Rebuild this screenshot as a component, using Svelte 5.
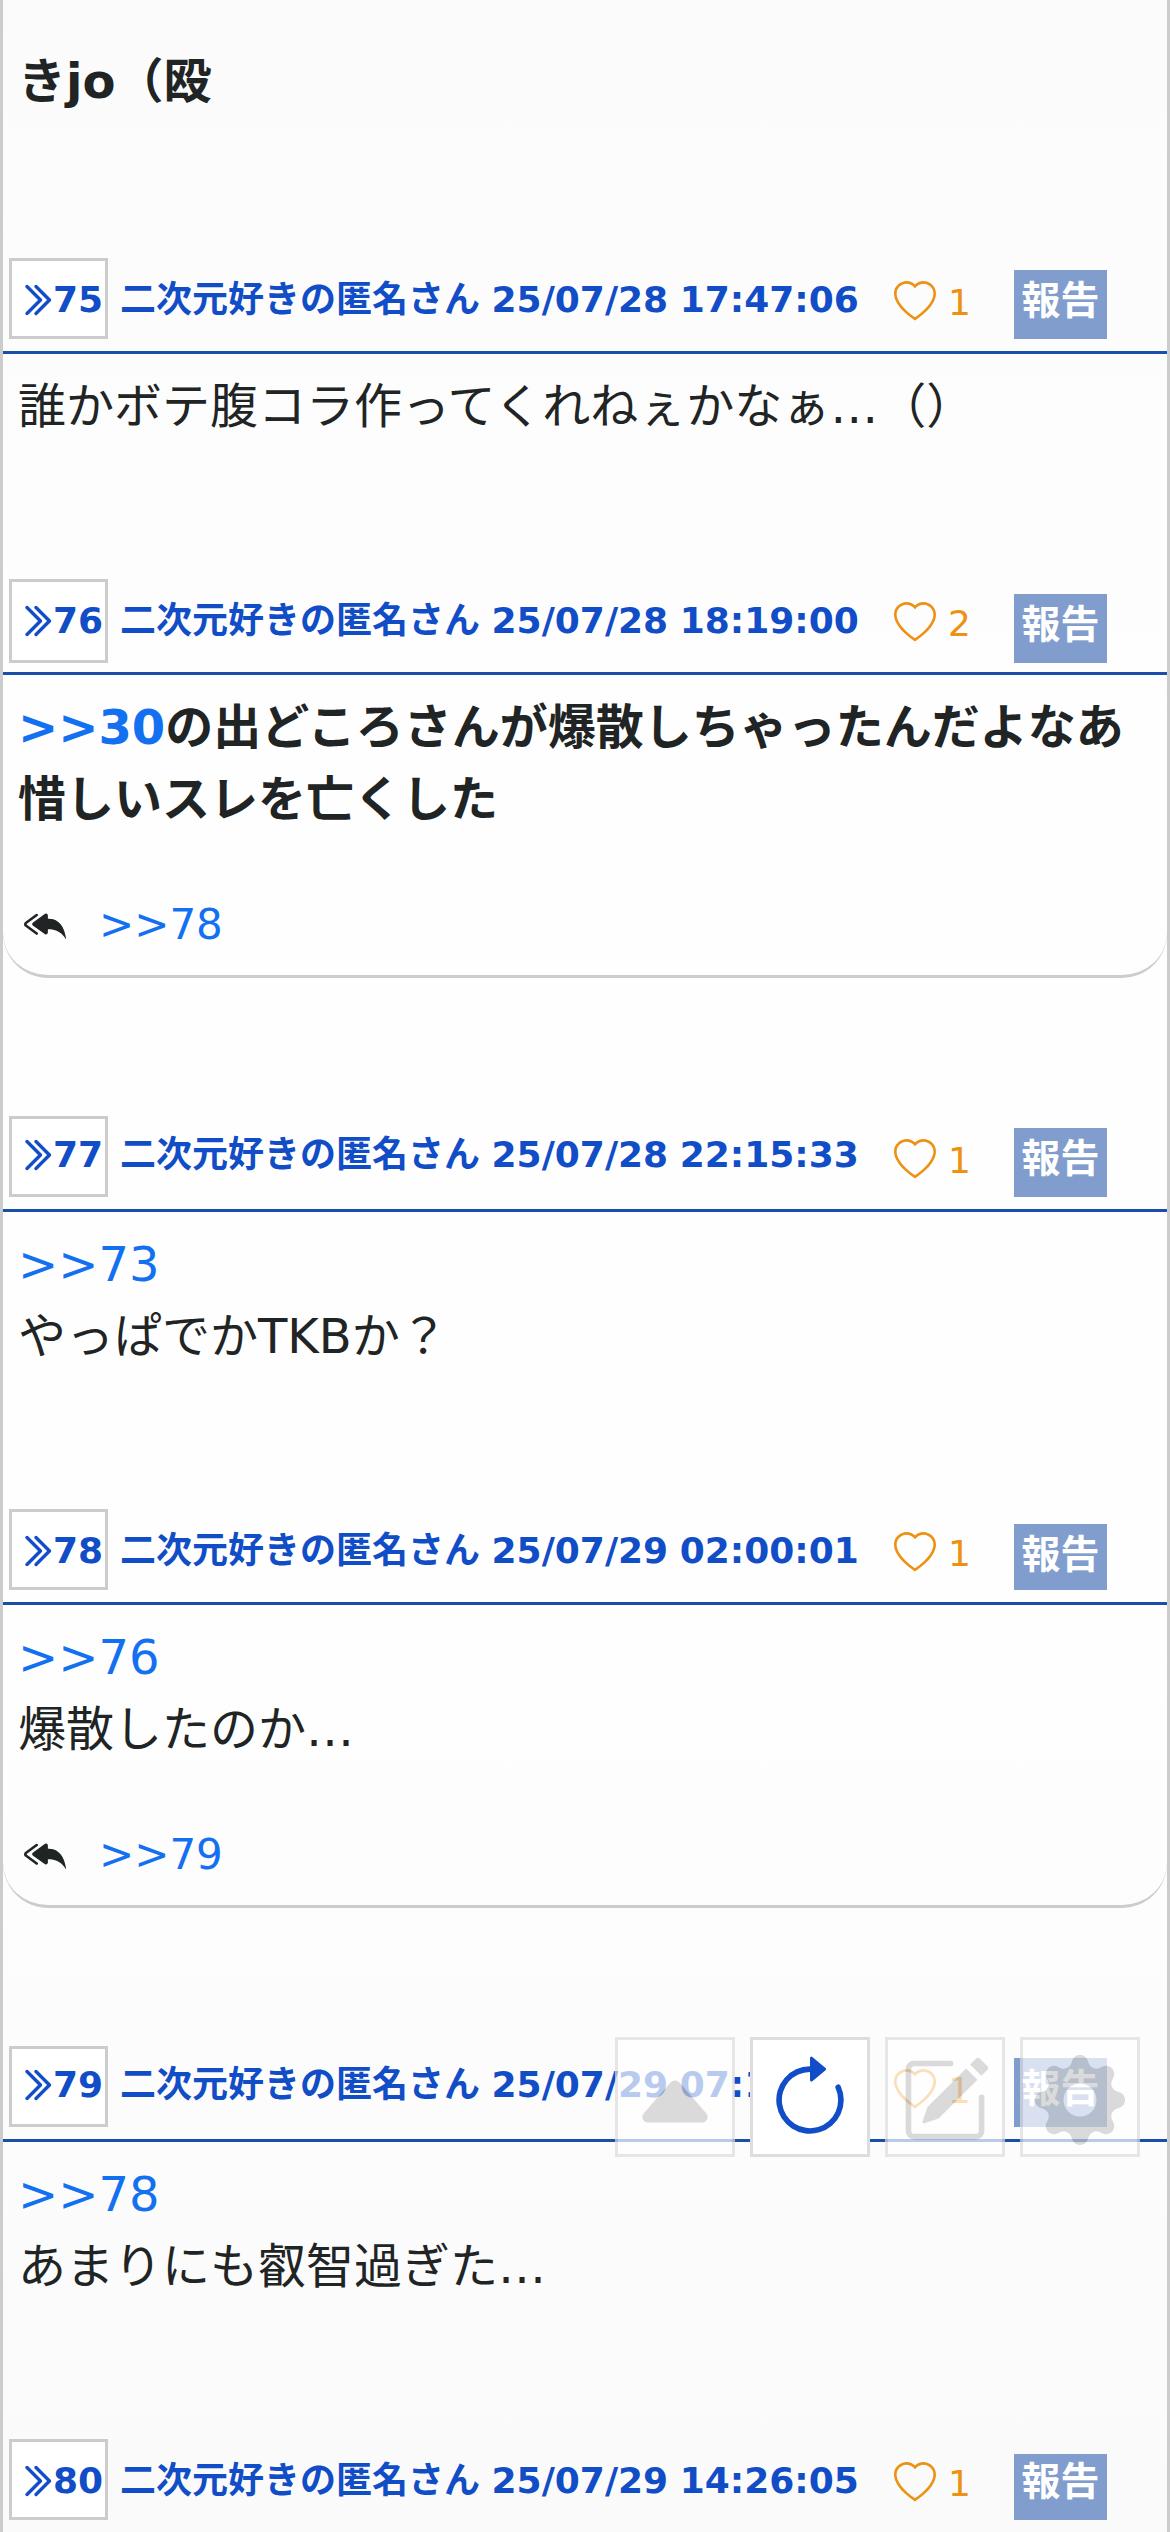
<script lang="ts">
  type Line = { anchor?: string; text?: string };
  type Post = {
    no: number;
    date: string;
    likes: number;
    bold?: boolean;
    lines: Line[];
    replies?: string[];
    fit?: string;
  };

  const name = '二次元好きの匿名さん';

  const posts: Post[] = [
    {
      no: 75,
      date: '25/07/28 17:47:06',
      likes: 1,
      lines: [{ text: '誰かボテ腹コラ作ってくれねぇかなぁ…（）' }],
    },
    {
      no: 76,
      date: '25/07/28 18:19:00',
      likes: 2,
      bold: true,
      lines: [
        { anchor: '>>30', text: 'の出どころさんが爆散しちゃったんだよなあ' },
        { text: '惜しいスレを亡くした' },
      ],
      replies: ['>>78'],
      fit: 'tall',
    },
    {
      no: 77,
      date: '25/07/28 22:15:33',
      likes: 1,
      lines: [{ anchor: '>>73' }, { text: 'やっぱでかTKBか？' }],
      fit: 'raised',
    },
    {
      no: 78,
      date: '25/07/29 02:00:01',
      likes: 1,
      lines: [{ anchor: '>>76' }, { text: '爆散したのか…' }],
      replies: ['>>79'],
      fit: 'short',
    },
    {
      no: 79,
      date: '25/07/29 07:18:32',
      likes: 1,
      lines: [{ anchor: '>>78' }, { text: 'あまりにも叡智過ぎた…' }],
      fit: 'raised',
    },
    {
      no: 80,
      date: '25/07/29 14:26:05',
      likes: 1,
      lines: [],
      fit: 'short tight',
    },
  ];
</script>

<main class="thread">
  <div class="tail">きjo（殴</div>

  {#each posts as post (post.no)}
    <article class="post">
      <header class="head {post.fit ?? ''}">
        <button class="number">
          <svg viewBox="0 0 16 16" width="36" height="36" fill="currentColor" stroke="currentColor" stroke-width="0.5" aria-hidden="true">
            <path d="M3.646 1.646a.5.5 0 0 1 .708 0l6 6a.5.5 0 0 1 0 .708l-6 6a.5.5 0 0 1-.708-.708L9.293 8 3.646 2.354a.5.5 0 0 1 0-.708" />
            <path d="M7.646 1.646a.5.5 0 0 1 .708 0l6 6a.5.5 0 0 1 0 .708l-6 6a.5.5 0 0 1-.708-.708L13.293 8 7.646 2.354a.5.5 0 0 1 0-.708" />
          </svg>
          <span>{post.no}</span>
        </button>
        <span class="who">{name} {post.date}</span>
        <button class="like">
          <svg viewBox="0 0 16 16" width="42" height="42" fill="currentColor" aria-hidden="true">
            <path d="m8 2.748-.717-.737C5.6.281 2.514.878 1.4 3.053c-.523 1.023-.641 2.5.314 4.385.92 1.815 2.834 3.989 6.286 6.357 3.452-2.368 5.365-4.542 6.286-6.357.955-1.886.838-3.362.314-4.385C13.486.878 10.4.28 8.717 2.01zM8 15C-7.333 4.868 3.279-3.04 7.824 1.143q.09.083.176.171a3 3 0 0 1 .176-.17C12.72-3.042 23.333 4.867 8 15" />
          </svg>
          <span>{post.likes}</span>
        </button>
        <button class="report">報告</button>
      </header>

      <div class="body" class:bold={post.bold} class:replied={post.replies}>
        {#each post.lines as line}
          <p>{#if line.anchor}<a href="#res">{line.anchor}</a>{/if}{line.text ?? ''}</p>
        {/each}
        {#if post.replies}
          <div class="replies">
            <svg viewBox="0 0 16 16" width="42" height="42" fill="currentColor" aria-hidden="true">
              <path d="M8.021 11.9 3.453 8.62a.72.72 0 0 1 0-1.238L8.021 4.1a.716.716 0 0 1 1.079.619V6c1.5 0 6 0 7 8-2.5-4.5-7-4-7-4v1.281c0 .56-.606.898-1.079.618z" />
              <path d="M5.232 4.293a.5.5 0 0 1-.106.7L1.114 7.945l-.042.028a.147.147 0 0 0 0 .252l.042.028 4.012 2.954a.5.5 0 1 1-.593.805L.539 9.073a1.147 1.147 0 0 1 0-1.946l3.994-2.94a.5.5 0 0 1 .699.106" />
            </svg>
            {#each post.replies as reply}
              <a href="#res">{reply}</a>
            {/each}
          </div>
        {/if}
      </div>
    </article>
  {/each}

  <nav class="tools">
    <button aria-label="上へ">
      <svg viewBox="0 0 16 16" width="90" height="90" fill="currentColor" aria-hidden="true">
        <path d="m7.247 4.86-4.796 5.481c-.566.647-.106 1.659.753 1.659h9.592a1 1 0 0 0 .753-1.659l-4.796-5.48a1 1 0 0 0-1.506 0z" />
      </svg>
    </button>
    <button class="active" aria-label="更新">
      <svg viewBox="0 0 16 16" width="90" height="90" fill="currentColor" aria-hidden="true">
        <path d="M8 3a5 5 0 1 0 4.546 2.914.5.5 0 0 1 .908-.417A6 6 0 1 1 8 2z" />
        <path d="M8 4.466V.534a.25.25 0 0 1 .41-.192l2.36 1.966c.12.1.12.284 0 .384L8.41 4.658A.25.25 0 0 1 8 4.466" />
      </svg>
    </button>
    <button aria-label="書き込む">
      <svg viewBox="0 0 16 16" width="90" height="90" fill="currentColor" aria-hidden="true">
        <path d="M15.502 1.94a.5.5 0 0 1 0 .706L14.459 3.69l-2-2L13.502.646a.5.5 0 0 1 .707 0l1.293 1.293zm-1.75 2.456-2-2L4.939 9.21a.5.5 0 0 0-.121.196l-.805 2.414a.25.25 0 0 0 .316.316l2.414-.805a.5.5 0 0 0 .196-.12l6.813-6.814z" />
        <path d="M1 13.5A1.5 1.5 0 0 0 2.5 15h11a1.5 1.5 0 0 0 1.5-1.5v-6a.5.5 0 0 0-1 0v6a.5.5 0 0 1-.5.5h-11a.5.5 0 0 1-.5-.5v-11a.5.5 0 0 1 .5-.5H9a.5.5 0 0 0 0-1H2.5A1.5 1.5 0 0 0 1 2.5z" />
      </svg>
    </button>
    <button aria-label="設定">
      <svg viewBox="0 0 16 16" width="90" height="90" fill="currentColor" aria-hidden="true">
        <path d="M9.405 1.05c-.413-1.4-2.397-1.4-2.81 0l-.1.34a1.464 1.464 0 0 1-2.105.872l-.31-.17c-1.283-.698-2.686.705-1.987 1.987l.169.311c.446.82.023 1.841-.872 2.105l-.34.1c-1.4.413-1.4 2.397 0 2.81l.34.1a1.464 1.464 0 0 1 .872 2.105l-.17.31c-.698 1.283.705 2.686 1.987 1.987l.311-.169a1.464 1.464 0 0 1 2.105.872l.1.34c.413 1.4 2.397 1.4 2.81 0l.1-.34a1.464 1.464 0 0 1 2.105-.872l.31.17c1.283.698 2.686-.705 1.987-1.987l-.169-.311a1.464 1.464 0 0 1 .872-2.105l.34-.1c1.4-.413 1.4-2.397 0-2.81l-.34-.1a1.464 1.464 0 0 1-.872-2.105l.17-.31c.698-1.283-.705-2.686-1.987-1.987l-.311.169a1.464 1.464 0 0 1-2.105-.872zM8 10.93a2.929 2.929 0 1 1 0-5.86 2.929 2.929 0 0 1 0 5.858z" />
      </svg>
    </button>
  </nav>
</main>

<style>
  .thread {
    position: relative;
    box-sizing: border-box;
    width: 1170px;
    height: 2532px;
    overflow: hidden;
    border: solid #ccc;
    border-width: 0 3px;
    background: linear-gradient(#fbfbfb, #fefefe 30%, #fefefe 65%, #fafafa);
    color: #212424;
    font-family: 'DejaVu Sans', 'Noto Sans CJK JP', sans-serif;
  }

  button {
    margin: 0;
    padding: 0;
    border: none;
    border-radius: 0;
    background: none;
    font: inherit;
    color: inherit;
    text-align: left;
  }
  svg {
    display: block;
    flex: none;
  }
  a {
    color: #1370f0;
    text-decoration: none;
  }

  .tail {
    padding: 45px 15px 141px;
    font-size: 48px;
    font-weight: 700;
    line-height: 72px;
  }

  .post {
    margin-bottom: 138px;
  }

  .head {
    display: flex;
    align-items: flex-start;
    box-sizing: border-box;
    height: 96px;
    padding-left: 6px;
    border-bottom: 3px solid #1a4eab;
    font-size: 36px;
    line-height: 54px;
    color: #114dc6;
    white-space: nowrap;
  }
  .number {
    display: flex;
    flex: none;
    box-sizing: border-box;
    width: 99px;
    height: 81px;
    padding: 12px 0 0 6px;
    border: 3px solid #ccc;
    background: #fff;
    font-weight: 700;
  }
  .number svg {
    margin: 9px -1px 0 0;
  }
  .who {
    width: 738px;
    margin: 15px 0 0 12px;
    font-weight: 700;
    word-spacing: -1px;
  }
  .like {
    display: flex;
    gap: 12px;
    width: 120px;
    margin: 18px 0 0 36px;
    color: #ed9112;
  }
  .like svg {
    margin-top: 5px;
  }
  .report {
    display: flex;
    justify-content: center;
    box-sizing: border-box;
    width: 93px;
    height: 69px;
    margin-top: 12px;
    background: #809dce;
    color: #fff;
    font-size: 39px;
    font-weight: 700;
    line-height: 61px;
  }

  .tall .number {
    height: 84px;
  }
  .tall .report {
    margin-top: 15px;
  }
  .short .report {
    margin-top: 15px;
    height: 66px;
  }
  .tight .report {
    line-height: 55px;
  }
  .raised .number {
    padding-top: 9px;
  }
  .raised .who {
    margin-top: 12px;
  }

  .body {
    padding: 16px 15px 0;
    margin-bottom: -1px;
    font-size: 48px;
    line-height: 72px;
  }
  .body p {
    margin: 0;
    white-space: nowrap;
  }
  .bold p {
    font-weight: 700;
  }
  .replied {
    margin-bottom: 0;
    border-bottom: 3px solid #ccc;
    border-radius: 0 0 45px 45px;
  }
  .replies {
    display: flex;
    align-items: center;
    gap: 33px;
    height: 63px;
    padding: 57px 6px 20px;
    font-size: 42px;
    line-height: 63px;
  }
  .replies a {
    padding-top: 2px;
  }

  .tools {
    position: absolute;
    right: 27px;
    bottom: 375px;
    display: flex;
    gap: 15px;
  }
  .tools button {
    display: flex;
    justify-content: center;
    box-sizing: border-box;
    width: 120px;
    height: 120px;
    padding-top: 15px;
    border: 3px solid #ddd;
    background: #fff;
    color: #ccc;
    opacity: 0.7;
  }
  .tools .active {
    color: #114dc6;
    opacity: 1;
  }
</style>
